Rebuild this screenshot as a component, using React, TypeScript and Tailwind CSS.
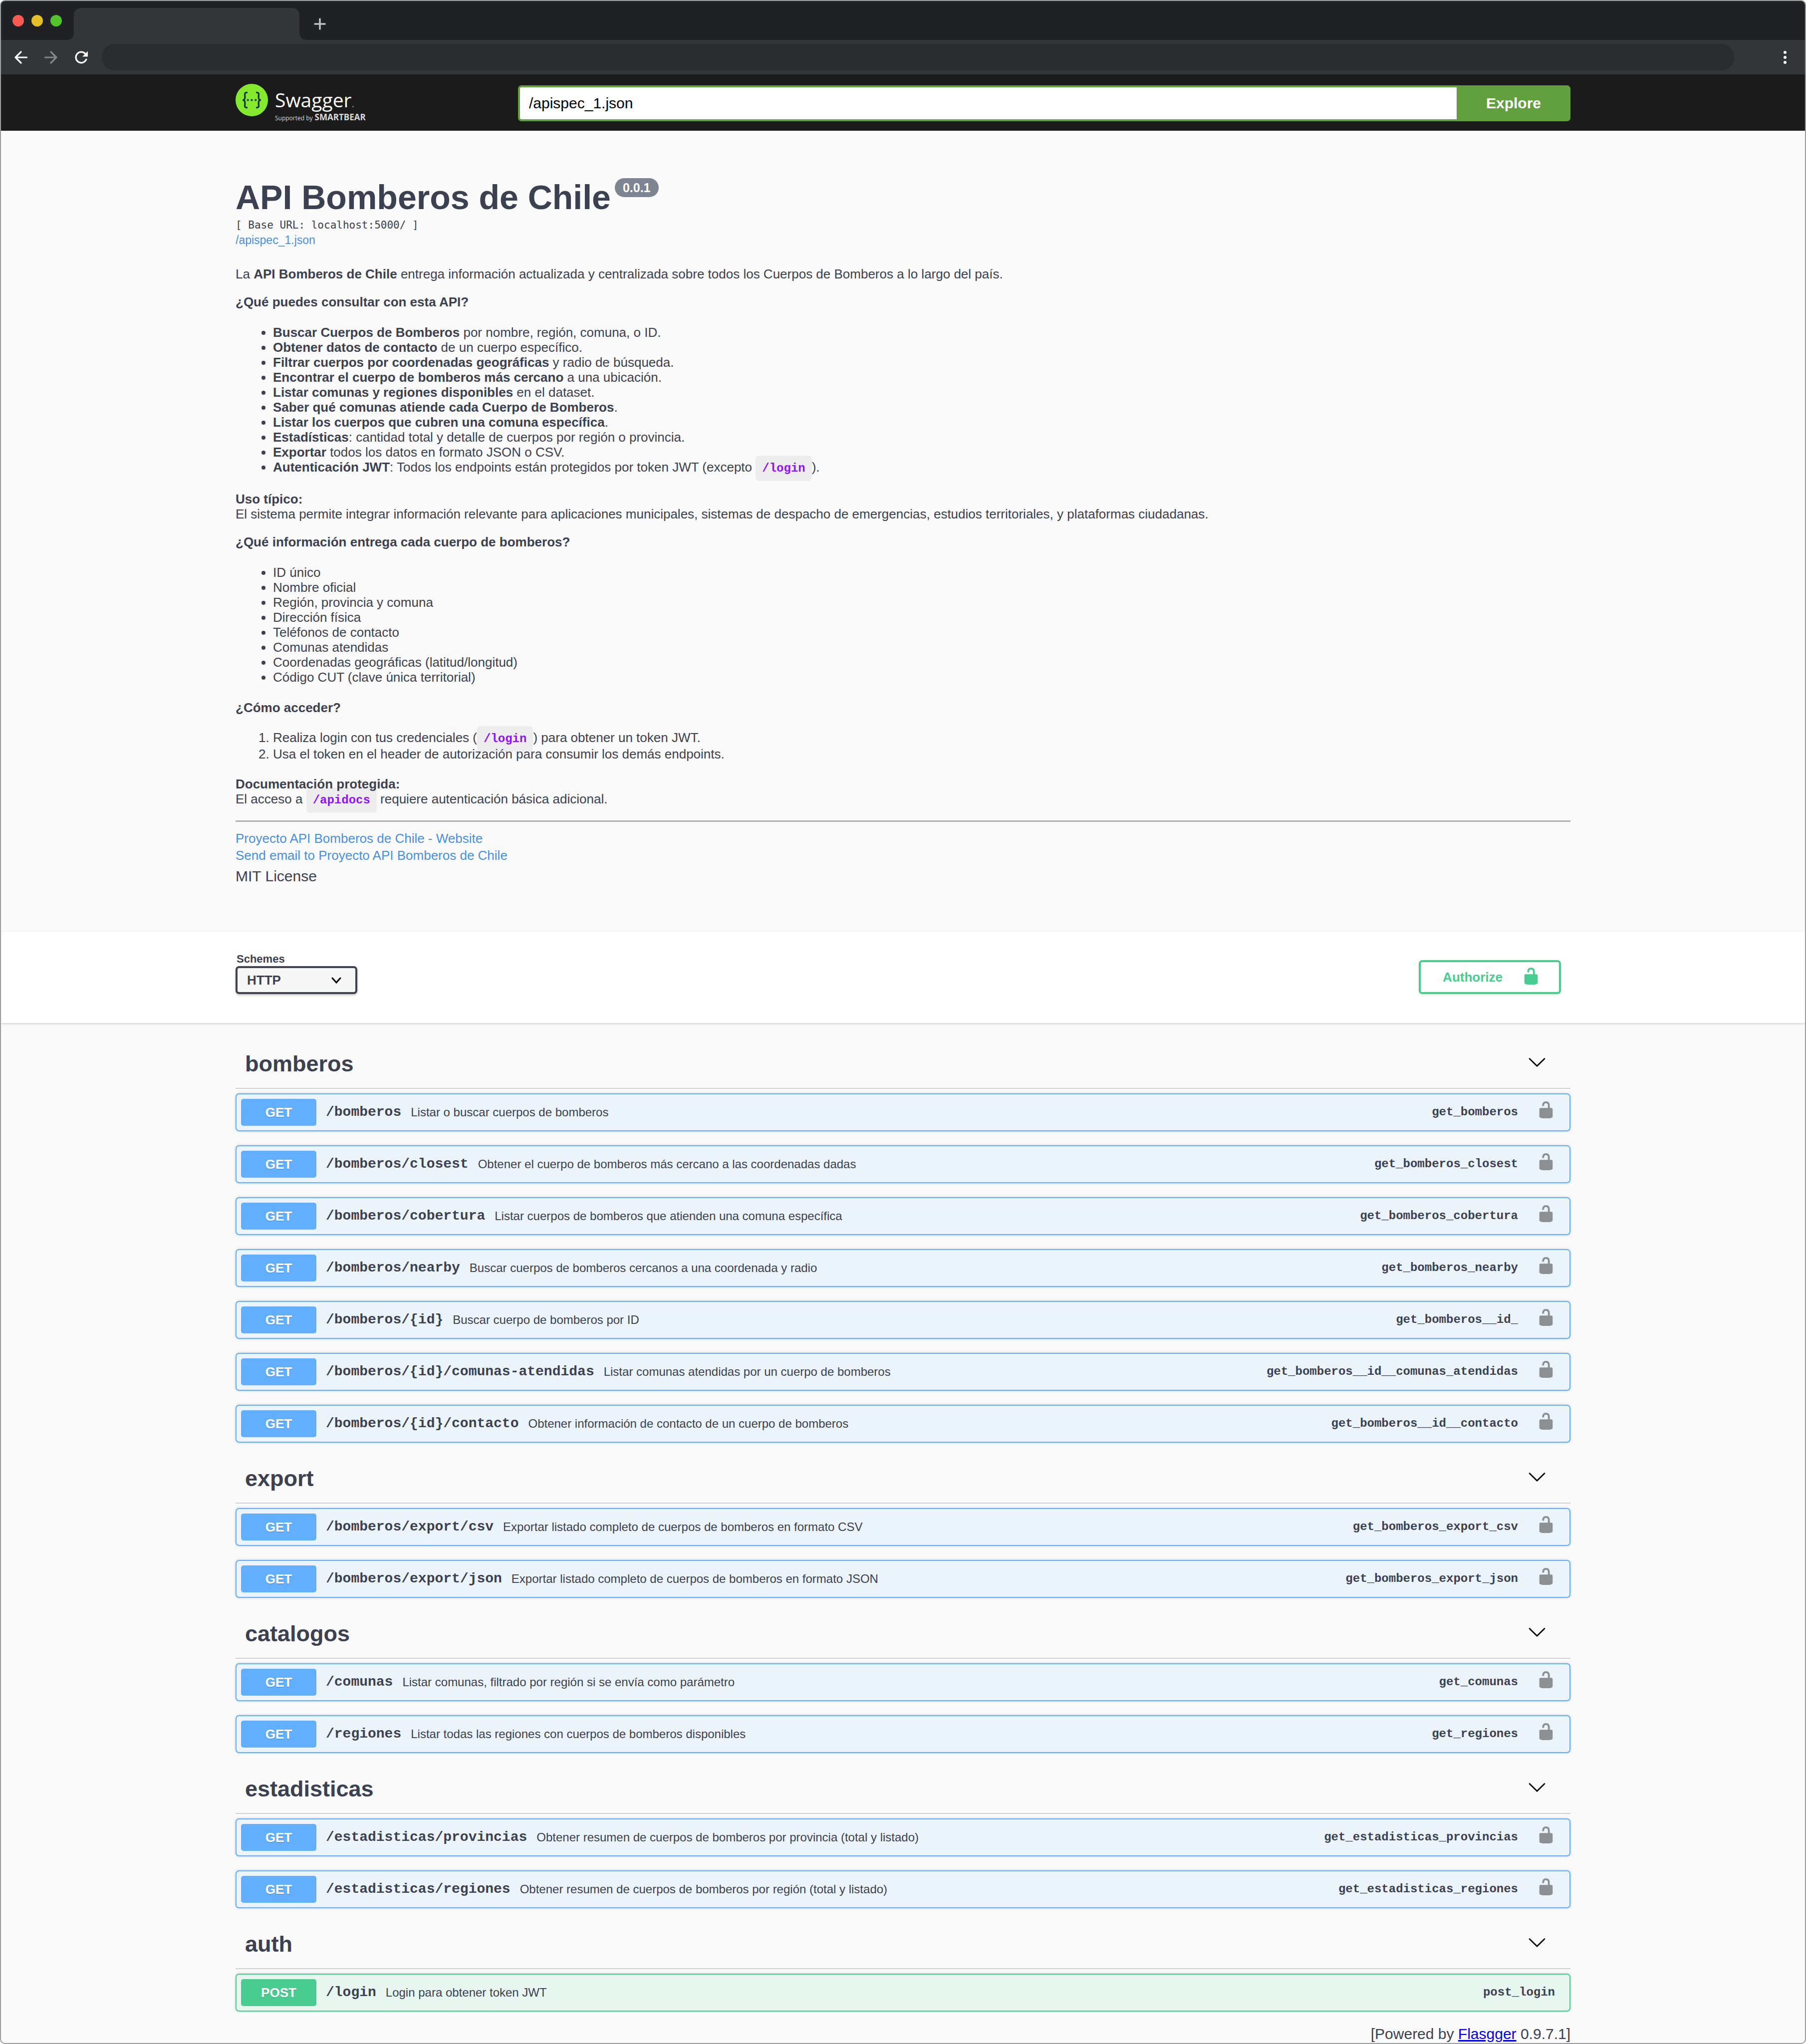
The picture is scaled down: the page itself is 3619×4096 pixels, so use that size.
import React from "react";

type Operation = {
  method: "GET" | "POST";
  path: string;
  summary: string;
  id: string;
  locked?: boolean;
};

type Tag = { name: string; operations: Operation[] };

const get = (path: string, summary: string, id: string): Operation => ({
  method: "GET",
  path,
  summary,
  id,
  locked: true,
});

const tags: Tag[] = [
  {
    name: "bomberos",
    operations: [
      get("/bomberos", "Listar o buscar cuerpos de bomberos", "get_bomberos"),
      get("/bomberos/closest", "Obtener el cuerpo de bomberos más cercano a las coordenadas dadas", "get_bomberos_closest"),
      get("/bomberos/cobertura", "Listar cuerpos de bomberos que atienden una comuna específica", "get_bomberos_cobertura"),
      get("/bomberos/nearby", "Buscar cuerpos de bomberos cercanos a una coordenada y radio", "get_bomberos_nearby"),
      get("/bomberos/{id}", "Buscar cuerpo de bomberos por ID", "get_bomberos__id_"),
      get("/bomberos/{id}/comunas-atendidas", "Listar comunas atendidas por un cuerpo de bomberos", "get_bomberos__id__comunas_atendidas"),
      get("/bomberos/{id}/contacto", "Obtener información de contacto de un cuerpo de bomberos", "get_bomberos__id__contacto"),
    ],
  },
  {
    name: "export",
    operations: [
      get("/bomberos/export/csv", "Exportar listado completo de cuerpos de bomberos en formato CSV", "get_bomberos_export_csv"),
      get("/bomberos/export/json", "Exportar listado completo de cuerpos de bomberos en formato JSON", "get_bomberos_export_json"),
    ],
  },
  {
    name: "catalogos",
    operations: [
      get("/comunas", "Listar comunas, filtrado por región si se envía como parámetro", "get_comunas"),
      get("/regiones", "Listar todas las regiones con cuerpos de bomberos disponibles", "get_regiones"),
    ],
  },
  {
    name: "estadisticas",
    operations: [
      get("/estadisticas/provincias", "Obtener resumen de cuerpos de bomberos por provincia (total y listado)", "get_estadisticas_provincias"),
      get("/estadisticas/regiones", "Obtener resumen de cuerpos de bomberos por región (total y listado)", "get_estadisticas_regiones"),
    ],
  },
  {
    name: "auth",
    operations: [
      { method: "POST", path: "/login", summary: "Login para obtener token JWT", id: "post_login" },
    ],
  },
];

const features: [string, string][] = [
  ["Buscar Cuerpos de Bomberos", " por nombre, región, comuna, o ID."],
  ["Obtener datos de contacto", " de un cuerpo específico."],
  ["Filtrar cuerpos por coordenadas geográficas", " y radio de búsqueda."],
  ["Encontrar el cuerpo de bomberos más cercano", " a una ubicación."],
  ["Listar comunas y regiones disponibles", " en el dataset."],
  ["Saber qué comunas atiende cada Cuerpo de Bomberos", "."],
  ["Listar los cuerpos que cubren una comuna específica", "."],
  ["Estadísticas", ": cantidad total y detalle de cuerpos por región o provincia."],
  ["Exportar", " todos los datos en formato JSON o CSV."],
];

const fields = [
  "ID único",
  "Nombre oficial",
  "Región, provincia y comuna",
  "Dirección física",
  "Teléfonos de contacto",
  "Comunas atendidas",
  "Coordenadas geográficas (latitud/longitud)",
  "Código CUT (clave única territorial)",
];

const container = "mx-auto w-full max-w-[2675px]";

function UnlockIcon({ className }: { className?: string }) {
  return (
    <svg viewBox="0 0 20 20" className={className} fill="currentColor" aria-hidden="true">
      <path d="M15.8 8H14V5.6C14 2.703 12.665 1 10 1 7.334 1 6 2.703 6 5.6V6h2v-.801C8 3.754 8.797 3 10 3c1.203 0 2 .754 2 2.199V8H4c-.553 0-1 .646-1 1.199V17c0 .549.428 1.139.951 1.307l1.197.387C5.672 18.861 6.55 19 7.1 19h5.8c.549 0 1.428-.139 1.951-.307l1.196-.387c.524-.167.953-.757.953-1.306V9.199C17 8.646 16.352 8 15.8 8z" />
    </svg>
  );
}

function ArrowDownIcon({ className }: { className?: string }) {
  return (
    <svg viewBox="0 0 20 20" className={className} fill="currentColor" aria-hidden="true">
      <path d="M17.418 6.109c.272-.268.709-.268.979 0s.271.701 0 .969l-7.908 7.83c-.27.268-.707.268-.979 0l-7.908-7.83c-.27-.268-.27-.701 0-.969.271-.268.709-.268.979 0L10 13.25l7.418-7.141z" />
    </svg>
  );
}

function TabFlare({ className }: { className: string }) {
  return (
    <svg viewBox="0 0 14 14" className={className} fill="#323639" aria-hidden="true">
      <path d="M14 0V14H0A14 14 0 0 0 14 0Z" />
    </svg>
  );
}

function BrowserChrome() {
  return (
    <div>
      <div className="flex h-[78px] items-end bg-[#202124]">
        <div className="flex gap-[15px] self-start pt-7 pl-[23px]">
          <span className="size-[23px] rounded-full bg-[#ff5a52]" />
          <span className="size-[23px] rounded-full bg-[#e6c029]" />
          <span className="size-[23px] rounded-full bg-[#53c22b]" />
        </div>
        <div className="relative ml-6 h-16 w-[452px] rounded-t-[14px] bg-[#323639]">
          <TabFlare className="absolute bottom-0 -left-3.5 size-3.5" />
          <TabFlare className="absolute -right-3.5 bottom-0 size-3.5 -scale-x-100" />
        </div>
        <button type="button" aria-label="New tab" className="mb-5 ml-[29px] text-[#bcc0c3]">
          <svg viewBox="0 0 24 24" className="size-6" stroke="currentColor" strokeWidth="3.6" strokeLinecap="round" aria-hidden="true">
            <path d="M12 2V22M2 12H22" />
          </svg>
        </button>
      </div>
      <div className="flex h-[69px] items-center bg-[#323639] text-white">
        <button type="button" aria-label="Back" className="ml-[27px]">
          <svg viewBox="0 0 26 26" className="size-[26px]" fill="none" stroke="currentColor" strokeWidth="3.2" strokeLinecap="round" strokeLinejoin="round" aria-hidden="true">
            <path d="M24.5 13H2M13 2 2 13 13 24" />
          </svg>
        </button>
        <button type="button" aria-label="Forward" className="ml-[34px] text-[#85888a]">
          <svg viewBox="0 0 26 26" className="size-[26px]" fill="none" stroke="currentColor" strokeWidth="3.2" strokeLinecap="round" strokeLinejoin="round" aria-hidden="true">
            <path d="M1.500 13H24M13 2 24 13 13 24" />
          </svg>
        </button>
        <button type="button" aria-label="Reload" className="ml-[35px]">
          <svg viewBox="0 0 26 26" className="size-[26px]" fill="none" aria-hidden="true">
            <path d="M22.800 17.200A10.800 10.800 0 1 1 20.600 5.400" stroke="currentColor" strokeWidth="3.3" strokeLinecap="round" />
            <path d="M26 0.500V11.500H15Z" fill="currentColor" />
          </svg>
        </button>
        <div className="ml-7 h-[53px] flex-1 rounded-full bg-[#282c2f]" />
        <button type="button" aria-label="Menu" className="mr-[35px] ml-[97px] flex flex-col gap-1 px-0.5">
          <span className="size-[6px] rounded-full bg-white" />
          <span className="size-[6px] rounded-full bg-white" />
          <span className="size-[6px] rounded-full bg-white" />
        </button>
      </div>
    </div>
  );
}

function Logo() {
  return (
    <a href="#" className="flex w-[566px] shrink-0 items-start gap-3.5">
      <svg viewBox="0 0 69 69" className="size-[65px]" fill="none" aria-hidden="true">
        <circle cx="34.5" cy="34.500" r="34.5" fill="#85ea2d" />
        <g stroke="#173647" strokeWidth="3.6">
          <path d="M25.500 18.500h-2c-3 0-4 1.500-3.800 4.500l.3 5c.2 4-1 6.500-5 6.500 4 0 5.200 2.500 5 6.500l-.3 5c-.2 3 .8 4.500 3.800 4.500h2" />
          <path d="M43.500 18.500h2c3 0 4 1.500 3.800 4.500l-.3 5c-.2 4 1 6.500 5 6.500-4 0-5.200 2.500-5 6.500l.3 5c.2 3-.8 4.500-3.800 4.500h-2" />
        </g>
        <g fill="#173647">
          <circle cx="26.200" cy="34.500" r="2.200" />
          <circle cx="34.500" cy="34.500" r="2.200" />
          <circle cx="42.800" cy="34.500" r="2.200" />
        </g>
      </svg>
      <span className="flex flex-col pt-[7px] font-['Open_Sans',sans-serif] text-white">
        <span className="text-[39px] leading-[50px]">
          Swagger<span className="text-[22px] leading-none text-[#8a8a8a]">.</span>
        </span>
        <span className="flex h-5 items-baseline gap-1 text-[#d8d8d8]">
          <span className="text-[12px] leading-5">Supported by</span>
          <span className="text-[17px] leading-5 font-bold">SMARTBEAR</span>
        </span>
      </span>
    </a>
  );
}

function TopBar() {
  return (
    <header className="bg-[#1b1b1b] pt-[19px] pb-[17px]">
      <div className={`${container} flex items-center`}>
        <Logo />
        <form className="flex h-[72px] flex-1" onSubmit={(e) => e.preventDefault()}>
          <input
            type="text"
            aria-label="API specification URL"
            defaultValue="/apispec_1.json"
            className="min-w-0 flex-1 rounded-l-[7px] border-4 border-r-0 border-[#62a03f] bg-white px-[18px] text-[30px] text-black outline-none"
          />
          <button type="submit" className="w-[228px] rounded-r-[7px] bg-[#62a03f] text-[30px] font-bold text-white">
            Explore
          </button>
        </form>
      </div>
    </header>
  );
}

function Code({ children }: { children: React.ReactNode }) {
  return (
    <code className="rounded-[7px] bg-black/5 px-[13px] py-[12px] font-['Liberation_Mono',monospace] text-[24px] font-bold text-[#9012fe]">
      {children}
    </code>
  );
}

function Info() {
  return (
    <section className={`${container} pt-[99px] pb-[95px]`}>
      <h1 className="flex items-start gap-2 text-[68px] leading-[68px] font-bold">
        API Bomberos de Chile
        <span className="-mt-1 rounded-full bg-[#7d8492] px-4 text-[25px] leading-[38px] text-white">0.0.1</span>
      </h1>
      <p className="mt-[7px] font-['DejaVu_Sans_Mono',monospace] text-[21px] leading-[30px]">
        [ Base URL: localhost:5000/ ]
      </p>
      <a href="#" className="block w-fit text-[23px] leading-[30px] text-[#4990e2]">
        /apispec_1.json
      </a>

      <div className="mt-[38px] text-[26px] leading-[30px]">
        <p>
          La <b>API Bomberos de Chile</b> entrega información actualizada y centralizada sobre todos los Cuerpos de
          Bomberos a lo largo del país.
        </p>
        <p className="mt-[26px] font-bold">¿Qué puedes consultar con esta API?</p>
        <ul className="my-[31px] list-disc pl-[75px]">
          {features.map(([label, rest]) => (
            <li key={label}>
              <b>{label}</b>
              {rest}
            </li>
          ))}
          <li>
            <b>Autenticación JWT</b>: Todos los endpoints están protegidos por token JWT (excepto <Code>/login</Code>).
          </li>
        </ul>
        <p>
          <b>Uso típico:</b>
          <br />
          El sistema permite integrar información relevante para aplicaciones municipales, sistemas de despacho de
          emergencias, estudios territoriales, y plataformas ciudadanas.
        </p>
        <p className="mt-[26px] font-bold">¿Qué información entrega cada cuerpo de bomberos?</p>
        <ul className="my-[31px] list-disc pl-[75px]">
          {fields.map((f) => (
            <li key={f}>{f}</li>
          ))}
        </ul>
        <p className="font-bold">¿Cómo acceder?</p>
        <ol className="my-[30px] list-decimal pl-[75px]">
          <li>
            Realiza login con tus credenciales (<Code>/login</Code>) para obtener un token JWT.
          </li>
          <li>Usa el token en el header de autorización para consumir los demás endpoints.</li>
        </ol>
        <p>
          <b>Documentación protegida:</b>
          <br />
          El acceso a <Code>/apidocs</Code> requiere autenticación básica adicional.
        </p>
      </div>

      <hr className="mt-[25px] border-t-[3px] border-[#b0b0b0]" />
      <div className="mt-4 flex flex-col items-start text-[26px] leading-[34px] text-[#4990e2]">
        <a href="#">Proyecto API Bomberos de Chile - Website</a>
        <a href="#">Send email to Proyecto API Bomberos de Chile</a>
      </div>
      <p className="mt-2 text-[30px] leading-[34px]">MIT License</p>
    </section>
  );
}

function SchemeBar() {
  return (
    <section className="bg-white pt-[42px] pb-[58px] shadow-[0_2px_4px_rgba(0,0,0,0.15)]">
      <div className={`${container} flex items-end justify-between pr-[19px]`}>
        <div className="flex flex-col gap-0.5">
          <label htmlFor="schemes" className="pl-0.5 text-[22px] leading-6 font-bold">
            Schemes
          </label>
          <div className="relative">
            <select
              id="schemes"
              className="h-14 w-[244px] appearance-none rounded-[7px] border-4 border-[#41444e] bg-[#f7f7f7] pl-[19px] text-[26px] font-bold shadow-[0_2px_4px_rgba(0,0,0,0.25)] outline-none"
            >
              <option>HTTP</option>
            </select>
            <svg viewBox="0 0 20 14" className="pointer-events-none absolute top-[22px] right-8 h-3.5 w-5 text-black" fill="none" stroke="currentColor" strokeWidth="3" strokeLinecap="round" aria-hidden="true">
              <path d="M2 2 10 11 18 2" />
            </svg>
          </div>
        </div>
        <button
          type="button"
          className="flex h-[68px] items-center gap-[38px] rounded-[7px] border-4 border-[#49cc90] pr-[37px] pl-11 text-[26px] font-bold text-[#49cc90] shadow-[0_2px_4px_rgba(0,0,0,0.1)]"
        >
          Authorize
          <UnlockIcon className="mb-1 size-[38px]" />
        </button>
      </div>
    </section>
  );
}

function OperationRow({ op }: { op: Operation }) {
  const isGet = op.method === "GET";
  return (
    <div
      className={`mb-7 flex h-[76px] items-center rounded-[7px] border-2 pl-[9px] shadow-[0_0_5px_rgba(0,0,0,0.19)] ${
        isGet ? "border-[#61affe] bg-[#ebf3fb]" : "border-[#49cc90] bg-[#e8f6f0]"
      }`}
    >
      <button type="button" className="flex min-w-0 flex-1 items-center gap-[19px] text-left">
        <span
          className={`h-[54px] w-[151px] shrink-0 rounded-[5px] text-center text-[26px] leading-[54px] font-bold text-white text-shadow-[0_2px_0_rgba(0,0,0,0.1)] ${
            isGet ? "bg-[#61affe]" : "bg-[#49cc90]"
          }`}
        >
          {op.method}
        </span>
        <span className="font-['Liberation_Mono',monospace] text-[28px] leading-8 font-bold">{op.path}</span>
        <span className="flex-1 text-[24px] leading-8">{op.summary}</span>
        <span className="font-['Liberation_Mono',monospace] text-[24px] leading-8 font-bold">{op.id}</span>
      </button>
      {op.locked ? (
        <button type="button" aria-label="Authorization" className="mr-7 mb-2.5 ml-[37px] text-[#8c9092]">
          <UnlockIcon className="size-[38px]" />
        </button>
      ) : (
        <span className="w-[29px]" />
      )}
    </div>
  );
}

export default function App() {
  return (
    <div className="bg-white">
      <div className="min-h-screen overflow-hidden rounded-[10px] border-2 border-[#9c9e9e] bg-[#fafafa] font-['Liberation_Sans',Arial,sans-serif] text-[#3b4151]">
        <BrowserChrome />
        <TopBar />
        <main>
          <Info />
          <SchemeBar />
          <div className={`${container} pt-[38px]`}>
            {tags.map((tag) => (
              <section key={tag.name}>
                <div className="mb-[9px] flex items-center justify-between border-b-2 border-[#cfd0d4] pt-[18px] pr-12 pb-[22px] pl-[19px]">
                  <h2 className="text-[45px] leading-[52px] font-bold">{tag.name}</h2>
                  <button type="button" aria-label={`Collapse ${tag.name}`} className="mb-2 text-black">
                    <ArrowDownIcon className="size-[38px]" />
                  </button>
                </div>
                {tag.operations.map((op) => (
                  <OperationRow key={op.id} op={op} />
                ))}
              </section>
            ))}
          </div>
        </main>
        <footer className={`${container} text-right text-[30px] leading-[34px]`}>
          [Powered by{" "}
          <a href="#" className="text-[#0000ee] underline">
            Flasgger
          </a>{" "}
          0.9.7.1]
        </footer>
      </div>
    </div>
  );
}
